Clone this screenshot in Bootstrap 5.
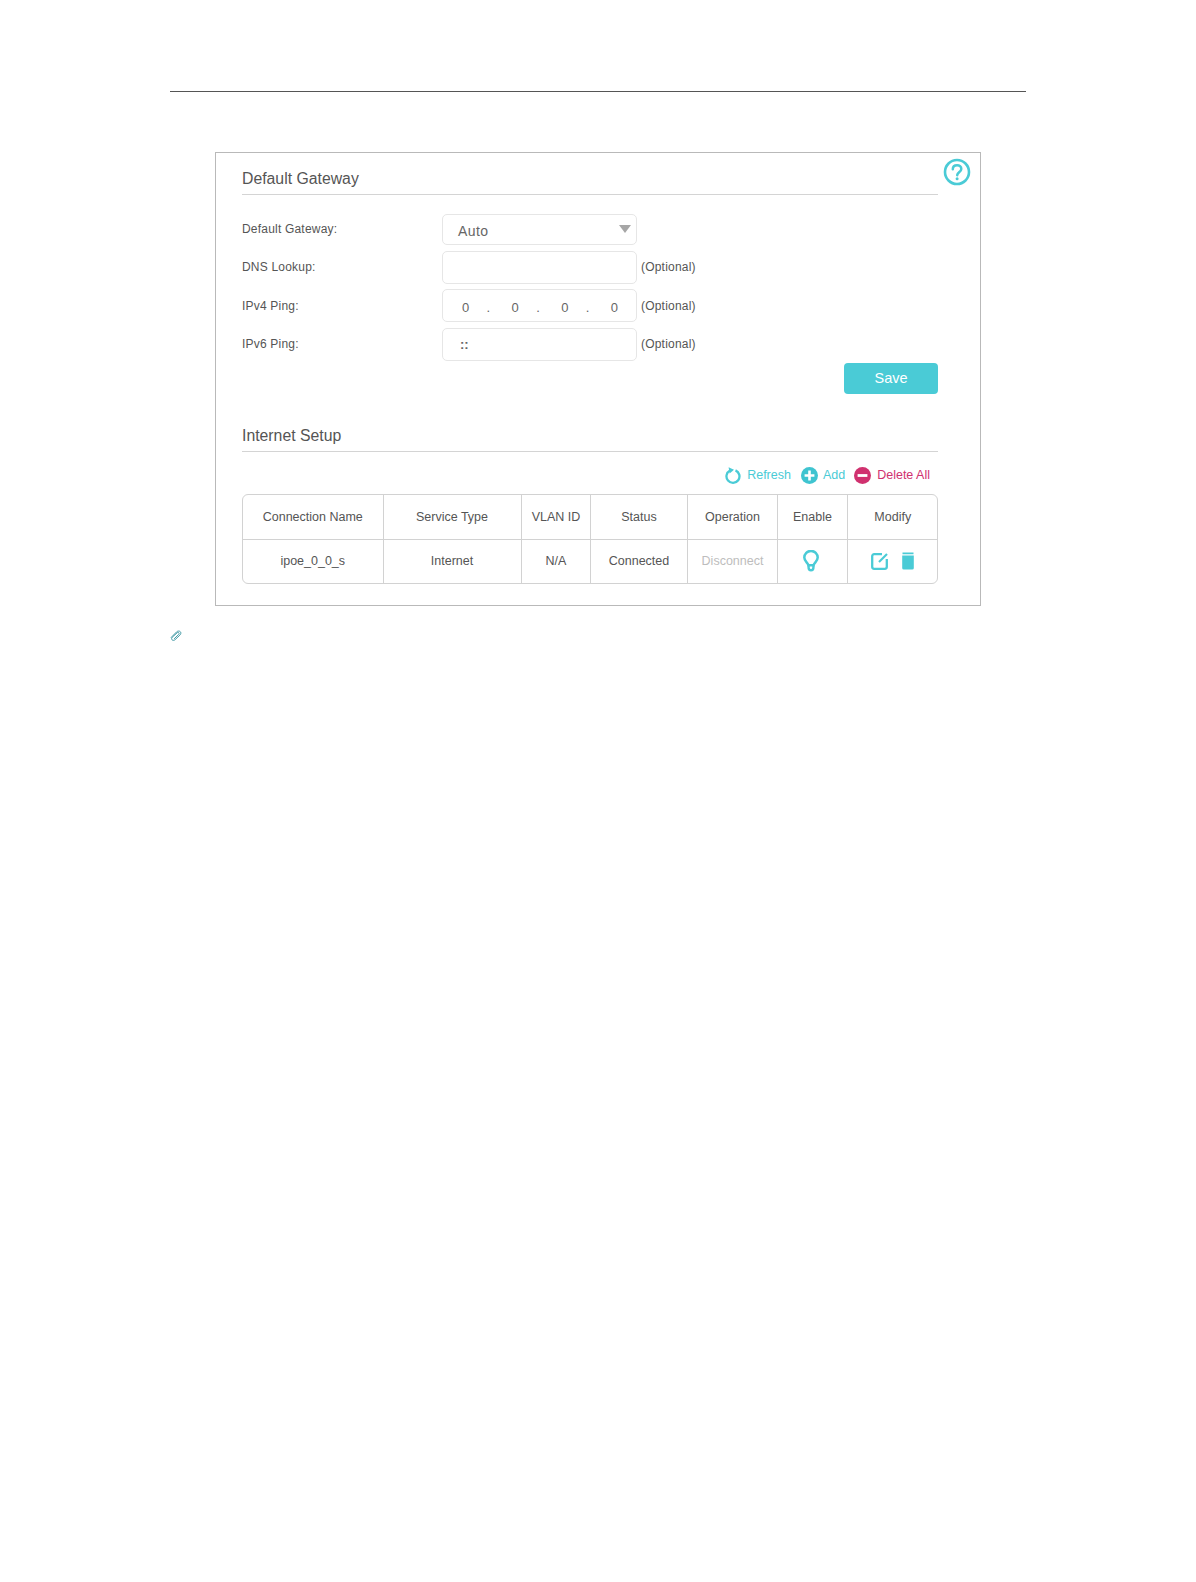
<!DOCTYPE html>
<html lang="en">
<head>
<meta charset="utf-8">
<title>Default Gateway</title>
<link href="https://cdn.jsdelivr.net/npm/bootstrap@5.3.0/dist/css/bootstrap.min.css" rel="stylesheet">
<style>
html,body{background:#fff;}
body{font-family:"Liberation Sans",Arial,sans-serif;color:#555;height:1582px;overflow:hidden;}
.page-wrap{width:856px;margin-left:170px;padding-top:91px;}
.page-rule{border-top:1px solid #555;height:0;}
.gw-panel{position:relative;width:766px;height:454px;margin:60px 0 0 45px;border:1px solid #b9b9b9;padding:0 42px 0 26px;}
.sec-title{font-size:15.8px;line-height:20px;color:#555;height:42px;padding-top:16px;border-bottom:1px solid #d4d4d4;margin:0;font-weight:400;}
.sec-two{margin-top:16px;padding-top:16px;}
.help-ico{position:absolute;left:727px;top:5px;width:28px;height:28px;}
.field-list{padding-top:19px;}
.field-row{display:flex;align-items:center;margin-bottom:5.5px;}
.field-row label{width:200px;font-size:12px;line-height:14px;color:#555;margin:0;letter-spacing:.2px;}
.field-top label{margin-bottom:2px;}
.fake-input{width:195px;height:33px;border:1px solid #e6e6e6;border-radius:5px;font-size:14px;color:#666;display:flex;align-items:center;background:#fff;}
.fake-select{height:31px;padding:3px 5px 0 15px;justify-content:space-between;letter-spacing:.45px;}
.caret-mark{width:0;height:0;margin-top:-4px;border-left:6px solid transparent;border-right:6px solid transparent;border-top:8px solid #a6a6a6;}
.ip-four{padding:4px 18px 0 19px;justify-content:space-between;font-size:13px;}
.ip-dot{margin-right:4px;}
.ip-six{padding:1px 0 0 17px;font-weight:700;font-size:13px;}
.opt-note{font-size:12px;line-height:14px;color:#555;margin:0 0 0 4px;letter-spacing:.2px;}
.save-row{display:flex;justify-content:flex-end;margin-top:-3.5px;}
.save-btn{width:94px;height:31px;padding:0;border:0;border-radius:4px;background:#4acbd6;color:#fff;font-size:14.5px;line-height:31px;}
.save-btn:hover{background:#4acbd6;color:#fff;}
.tool-row{display:flex;justify-content:flex-end;align-items:center;height:42px;padding-right:8px;padding-top:6px;font-size:12.5px;}
.tool-item{display:flex;align-items:center;margin-left:10px;color:#4acbd6;}
.tool-item svg{margin-right:5px;display:block;}
.tool-del{color:#d0316f;margin-left:9px;}
.tool-del svg{margin-right:6px;}
.net-box{border:1px solid #d2d2d2;border-radius:6px;overflow:hidden;width:696px;height:90px;}
.net-table{table-layout:fixed;width:100%;margin:0;font-size:12.5px;color:#555;--bs-table-color:#555;}
.net-table th,.net-table td{padding:0;text-align:center;vertical-align:middle;border:0;border-right:1px solid #d2d2d2;font-weight:400;color:#555;}
.net-table tr > :nth-child(n+3){padding-left:1px;}
.net-table th{height:45px;padding-top:2px;border-bottom:1px solid #d2d2d2;}
.net-table td{height:43px;}
.net-table th:last-child,.net-table td:last-child{border-right:0;}
.cw-a{width:140px;}.cw-b{width:138px;}.cw-c{width:69px;}.cw-d{width:97px;}.cw-e{width:90px;}.cw-f{width:70px;}.cw-g{width:90px;}
.off-text{color:#bdbdbd !important;}
.act-icons{display:flex;justify-content:center;align-items:center;gap:12px;}
.bulb-cell{display:flex;justify-content:center;padding-right:3px;}
.clip-ico{display:block;margin-top:24px;}
</style>
</head>
<body>
<div class="page-wrap">
  <div class="page-rule"></div>
  <div class="gw-panel">
    <svg class="help-ico" viewBox="0 0 28 28" fill="none" aria-hidden="true">
      <circle cx="14" cy="14" r="12" stroke="#4acbd6" stroke-width="2.6"/>
      <path d="M9.8 11.2c0-2.5 1.9-4 4.3-4s4.2 1.5 4.2 3.7c0 3-3.9 3-4.1 6.3" stroke="#4acbd6" stroke-width="2.5" stroke-linecap="round"/>
      <circle cx="14.1" cy="20.8" r="1.5" fill="#4acbd6"/>
    </svg>
    <h2 class="sec-title">Default Gateway</h2>
    <div class="field-list">
      <div class="field-row field-top"><label>Default Gateway:</label><div class="fake-input fake-select"><span>Auto</span><span class="caret-mark"></span></div></div>
      <div class="field-row"><label>DNS Lookup:</label><div class="fake-input"></div><span class="opt-note">(Optional)</span></div>
      <div class="field-row"><label>IPv4 Ping:</label><div class="fake-input ip-four"><span>0</span><span class="ip-dot">.</span><span>0</span><span class="ip-dot">.</span><span>0</span><span class="ip-dot">.</span><span>0</span></div><span class="opt-note">(Optional)</span></div>
      <div class="field-row"><label>IPv6 Ping:</label><div class="fake-input ip-six">::</div><span class="opt-note">(Optional)</span></div>
    </div>
    <div class="save-row"><button type="button" class="btn save-btn">Save</button></div>
    <h2 class="sec-title sec-two">Internet Setup</h2>
    <div class="tool-row">
      <span class="tool-item">
        <svg width="17" height="18" viewBox="0 0 17 18" fill="none" aria-hidden="true"><path d="M5 3.6A6.5 6.5 0 1 0 10.5 3.4" stroke="#4acbd6" stroke-width="2.3"/><path d="M3.6.2l5.4 2.6L4.6 6.4z" fill="#4acbd6"/></svg>Refresh</span>
      <span class="tool-item">
        <svg width="17" height="17" viewBox="0 0 17 17" aria-hidden="true"><circle cx="8.5" cy="8.5" r="8.5" fill="#3fc4d0"/><path d="M8.5 3.6v9.8M3.6 8.5h9.8" stroke="#fff" stroke-width="2.6"/></svg>Add</span>
      <span class="tool-item tool-del">
        <svg width="17" height="17" viewBox="0 0 17 17" aria-hidden="true"><circle cx="8.5" cy="8.5" r="8.5" fill="#d0316f"/><path d="M3.6 8.5h9.8" stroke="#fff" stroke-width="2.8"/></svg>Delete All</span>
    </div>
    <div class="net-box">
      <table class="table net-table">
        <colgroup><col class="cw-a"><col class="cw-b"><col class="cw-c"><col class="cw-d"><col class="cw-e"><col class="cw-f"><col class="cw-g"></colgroup>
        <thead><tr><th>Connection Name</th><th>Service Type</th><th>VLAN ID</th><th>Status</th><th>Operation</th><th>Enable</th><th>Modify</th></tr></thead>
        <tbody><tr><td>ipoe_0_0_s</td><td>Internet</td><td>N/A</td><td>Connected</td><td class="off-text">Disconnect</td>
          <td><div class="bulb-cell"><svg width="16" height="22" viewBox="0 0 16 22" fill="none" aria-hidden="true"><path d="M5.4 15.2C5 12.6 1.3 11.4 1.3 7.6a6.7 6.7 0 0 1 13.4 0c0 3.8-3.7 5-4.1 7.6z" stroke="#4acbd6" stroke-width="2.5"/><path d="M5.6 15.5v2.3a2.4 2.4 0 0 0 4.8 0v-2.3" stroke="#4acbd6" stroke-width="2.4"/></svg></div></td>
          <td><div class="act-icons">
            <svg width="18" height="18" viewBox="0 0 18 18" fill="none" aria-hidden="true"><path d="M11 2.2H3.2a2 2 0 0 0-2 2v10.6a2 2 0 0 0 2 2h10.6a2 2 0 0 0 2-2V7" stroke="#4acbd6" stroke-width="2.3"/><path d="M8 10L16 2" stroke="#4acbd6" stroke-width="2.2"/></svg>
            <svg width="14" height="18" viewBox="0 0 14 18" aria-hidden="true"><path d="M1.5 0.6h11v1.6h-11z" fill="#4acbd6"/><path d="M1.2 3.4h11.6V16a1.6 1.6 0 0 1-1.6 1.6H2.8A1.6 1.6 0 0 1 1.2 16z" fill="#4acbd6"/></svg>
          </div></td></tr></tbody>
      </table>
    </div>
  </div>
  <svg class="clip-ico" width="12" height="11" viewBox="0 0 12 11" fill="none" aria-hidden="true"><path d="M1.2 7.4L6.6 1.9c1.2-1.1 3-1.1 3.8-.1.8 1 .5 2.3-.5 3.3L5.2 9.6c-1 .9-2.4 1-3.2.2-.7-.8-.5-1.8.4-2.7L7 2.9c.7-.6 1.5-.6 1.9-.1.4.5.3 1.1-.3 1.7L4.4 8.6" stroke="#2f8f9c" stroke-width=".9" stroke-linecap="round"/></svg>
</div>
<script src="https://cdn.jsdelivr.net/npm/bootstrap@5.3.0/dist/js/bootstrap.bundle.min.js"></script>
</body>
</html>
